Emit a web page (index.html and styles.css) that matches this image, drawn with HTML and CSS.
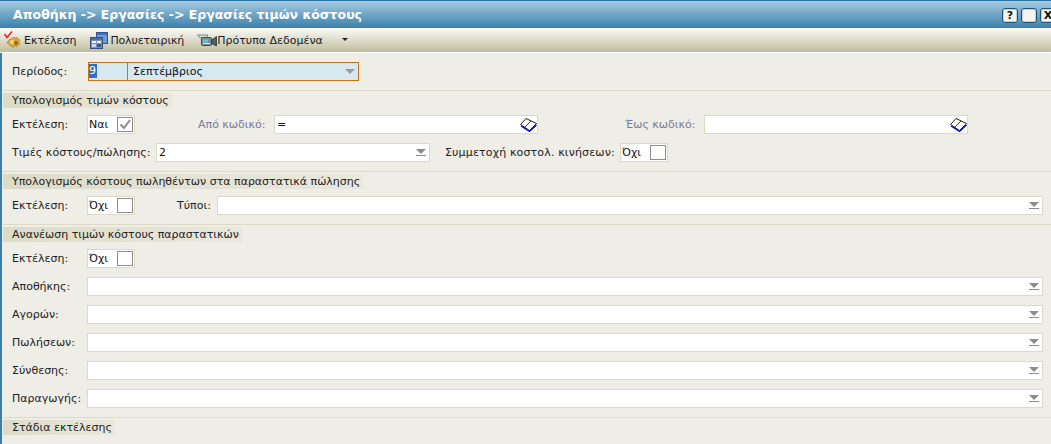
FILE: index.html
```html
<!DOCTYPE html>
<html>
  <head>
    <meta charset="utf-8" />
    <title>Εργασίες τιμών κόστους</title>
    <link rel="stylesheet" href="styles.css">
  </head>
  <body>
    <div class="window">
      <div class="titlebar">
        <h1>Αποθήκη -&gt; Εργασίες -&gt; Εργασίες τιμών κόστους</h1>
        <div class="winbtns">
          <span class="winbtn">?</span>
          <span class="winbtn"></span>
          <span class="winbtn">X</span>
        </div>
      </div>

      <div class="toolbar">
        <span class="tool tool-run">
          <svg width="18" height="18" viewBox="0 0 18 18">
            <path d="M5 10 L7 8 L9 8 L10 6 L12 7 L14 6 L15 8 L17 9 L16 11 L17 13 L15 14 L14 16 L12 15 L10 17 L9 15 L7 15 L6 13 L4 12 Z" fill="#dba63c" stroke="#b8842a" stroke-width="0.7" />
            <circle cx="9" cy="11" r="2.2" fill="#f2cf78" />
            <circle cx="13" cy="12" r="2" fill="#9a6420" />
            <path d="M1.5 3 L4 6.5 L9 0.5" fill="none" stroke="#e02828" stroke-width="1.6" />
          </svg>
          Εκτέλεση
        </span>
        <span class="tool tool-multi">
          <svg width="18" height="17" viewBox="0 0 18 17">
            <rect x="6.5" y="0.5" width="11" height="11" fill="#6d9ad8" stroke="#2f5596" />
            <rect x="7" y="1" width="10" height="2" fill="#3f70c0" />
            <rect x="0.5" y="5.5" width="12" height="11" fill="#7d94b8" stroke="#34507e" />
            <rect x="1" y="6" width="11" height="2" fill="#4f6c9c" />
            <rect x="2" y="9" width="4" height="2" fill="#eef2f8" />
            <rect x="7" y="9" width="4" height="2" fill="#eef2f8" />
            <rect x="2" y="12" width="4" height="3" fill="#cfd8e6" />
            <rect x="7" y="12" width="4" height="3" fill="#3c5580" />
          </svg>
          Πολυεταιρική
        </span>
        <span class="tool tool-tpl">
          <svg width="20" height="13" viewBox="0 0 20 13">
            <path d="M0.5 1 H11 L9 4 H3 Z" fill="#d4dce0" stroke="#5e6e76" stroke-width="0.8" />
            <rect x="4.5" y="3.5" width="10" height="8" rx="1" fill="#7d8f98" stroke="#3a4a52" />
            <rect x="6" y="5.5" width="5" height="3" fill="#58c4cc" />
            <rect x="6" y="9" width="7" height="1" fill="#d8e0e4" />
            <path d="M14.5 6 L19.5 2.5 V12 L14.5 9.5 Z" fill="#4f6068" stroke="#2c383e" stroke-width="0.8" />
          </svg>
          Πρότυπα Δεδομένα
        </span>
        <span class="tool-more"></span>
      </div>

      <div class="content">
        <div class="row">
          <label class="lbl">Περίοδος:</label>
          <div class="period">
            <span class="period-num"><span class="selected">9</span></span>
            <span class="period-name">Σεπτέμβριος</span>
            <span class="arrow-plain"></span>
          </div>
        </div>

        <section class="group">
          <h2>Υπολογισμός τιμών κόστους</h2>
          <div class="row">
            <label class="lbl">Εκτέλεση:</label>
            <div class="check"><span>Ναι</span>
              <span class="box">
                <svg width="14" height="13" viewBox="0 0 14 13"><path d="M2.5 6.5 L6 10 L12 2" fill="none" stroke="#8c8c8c" stroke-width="2" /></svg>
              </span>
            </div>
            <label class="lbl-from">Από κωδικό:</label>
            <div class="field field-code">
              <span>=</span>
              <svg class="book" width="17" height="14" viewBox="0 0 17 14">
                <path d="M0.5 6.5 L6 0.5 L16.5 5.5 L9.5 12.5 Z" fill="#fff" stroke="#000" stroke-width="0.9" />
                <path d="M1 8 L9.5 13.5 L16.5 7" fill="none" stroke="#0000e0" stroke-width="1.2" />
                <path d="M11 3 L4.5 9.5" stroke="#000" stroke-width="0.8" />
              </svg>
            </div>
            <label class="lbl-to">Έως κωδικό:</label>
            <div class="field field-code">
              <span></span>
              <svg class="book" width="17" height="14" viewBox="0 0 17 14">
                <path d="M0.5 6.5 L6 0.5 L16.5 5.5 L9.5 12.5 Z" fill="#fff" stroke="#000" stroke-width="0.9" />
                <path d="M1 8 L9.5 13.5 L16.5 7" fill="none" stroke="#0000e0" stroke-width="1.2" />
                <path d="M11 3 L4.5 9.5" stroke="#000" stroke-width="0.8" />
              </svg>
            </div>
          </div>
          <div class="row">
            <label class="lbl-auto">Τιμές κόστους/πώλησης:</label>
            <div class="field field-cost"><span>2</span><span class="arrow"></span></div>
            <label class="lbl-part">Συμμετοχή κοστολ. κινήσεων:</label>
            <div class="check"><span>Όχι</span><span class="box"></span></div>
          </div>
        </section>

        <section class="group">
          <h2>Υπολογισμός κόστους πωληθέντων στα παραστατικά πώλησης</h2>
          <div class="row">
            <label class="lbl">Εκτέλεση:</label>
            <div class="check"><span>Όχι</span><span class="box"></span></div>
            <label class="lbl-types">Τύποι:</label>
            <div class="field field-grow"><span></span><span class="arrow"></span></div>
          </div>
        </section>

        <section class="group">
          <h2>Ανανέωση τιμών κόστους παραστατικών</h2>
          <div class="row">
            <label class="lbl">Εκτέλεση:</label>
            <div class="check"><span>Όχι</span><span class="box"></span></div>
          </div>
          <div class="row">
            <label class="lbl">Αποθήκης:</label>
            <div class="field field-grow"><span></span><span class="arrow"></span></div>
          </div>
          <div class="row">
            <label class="lbl">Αγορών:</label>
            <div class="field field-grow"><span></span><span class="arrow"></span></div>
          </div>
          <div class="row">
            <label class="lbl">Πωλήσεων:</label>
            <div class="field field-grow"><span></span><span class="arrow"></span></div>
          </div>
          <div class="row">
            <label class="lbl">Σύνθεσης:</label>
            <div class="field field-grow"><span></span><span class="arrow"></span></div>
          </div>
          <div class="row">
            <label class="lbl">Παραγωγής:</label>
            <div class="field field-grow"><span></span><span class="arrow"></span></div>
          </div>
        </section>

        <section class="group">
          <h2>Στάδια εκτέλεσης</h2>
        </section>
      </div>
    </div>
  </body>
</html>
```

FILE: styles.css
```css
html, body {
  margin: 0;
  height: 100%;
  overflow: hidden;
}

body {
  font-family: "DejaVu Sans", "Liberation Sans", sans-serif;
  font-size: 11px;
  color: #222;
  background: #eeede6;
}

.window {
  display: flex;
  flex-direction: column;
  height: 444px;
  box-sizing: border-box;
  border-left: 2px solid #3a80ac;
}

/* title bar */
.titlebar {
  display: flex;
  align-items: center;
  justify-content: space-between;
  height: 28px;
  margin-left: -2px;
  box-sizing: border-box;
  border-top: 1px solid #2c74a4;
  background: linear-gradient(#a6cbe0, #3b80ac);
}

.titlebar h1 {
  margin: 0 0 0 13px;
  font-size: 12.5px;
  font-weight: bold;
  color: #fff;
  white-space: nowrap;
}

.winbtns {
  display: flex;
  gap: 3px;
  margin-right: -5px;
  padding-top: 1px;
}

.winbtn {
  box-sizing: border-box;
  width: 16px;
  height: 15px;
  border: 1px solid #1e5480;
  border-radius: 3px;
  background: #f6f4ec;
  box-shadow: inset 0 0 0 1px #bcd0de;
  font-size: 11px;
  font-weight: bold;
  line-height: 13px;
  text-align: center;
  color: #111;
}

/* toolbar */
.toolbar {
  display: flex;
  align-items: center;
  height: 24px;
  margin-left: -2px;
  border-bottom: 1px solid #fff;
  background: linear-gradient(#fbfbf6, #c0bd9e);
}

.tool {
  display: flex;
  align-items: center;
  white-space: nowrap;
  color: #1a1a2a;
}

.tool-run {
  margin-left: 3px;
  gap: 3px;
}

.tool-multi {
  margin-left: 14px;
  gap: 2px;
  letter-spacing: -0.15px;
}

.tool-tpl {
  margin-left: 13px;
}

.tool-more {
  width: 0;
  height: 0;
  margin: 0 0 2px 19px;
  border: 3px solid transparent;
  border-top: 3px solid #222;
  border-bottom: 0;
}

/* form */
.content {
  flex: 1;
  padding-top: 9px;
}

.row {
  display: flex;
  align-items: center;
  height: 19px;
  margin-bottom: 9px;
  padding-left: 10px;
  white-space: nowrap;
}

.lbl {
  width: 75px;
  flex: none;
}

.lbl-auto {
  width: 144px;
  flex: none;
  letter-spacing: 0.08px;
}

.lbl-from {
  margin-left: 63px;
  width: 76px;
  color: #7a7a9a;
}

.lbl-to {
  margin-left: 87px;
  width: 79px;
  color: #7a7a9a;
}

.lbl-part {
  margin-left: 15px;
  width: 175px;
  letter-spacing: 0.15px;
}

.lbl-types {
  margin-left: 42px;
  width: 40px;
}

.group {
  margin-left: 1px;
  border-top: 1px solid #dcdac6;
}

.group h2 {
  display: table;
  margin: 2px 0 7px;
  padding: 0 3px 0 9px;
  height: 15px;
  line-height: 15px;
  font-size: 11px;
  font-weight: normal;
  background: linear-gradient(to right, #dddbc8, #e9e8dd);
}

.group .row {
  padding-left: 9px;
}

.field,
.check {
  display: flex;
  align-items: center;
  box-sizing: border-box;
  height: 19px;
  border: 1px solid #dcdac6;
  background: #fff;
  color: #111;
}

.field {
  justify-content: space-between;
  padding: 0 3px 0 2px;
}

.check {
  flex: none;
  width: 48px;
  justify-content: space-between;
  padding: 0 1px 0 1px;
}

.box {
  display: flex;
  align-items: center;
  justify-content: center;
  box-sizing: border-box;
  width: 16px;
  height: 15px;
  border: 1px solid #8c8c8c;
  background: #fff;
}

.field-code {
  width: 264px;
  padding-right: 0;
}

.field-cost {
  width: 274px;
}

.field-grow {
  flex: 1;
  margin-right: 8px;
}

/* dropdown arrow with a bar under it */
.arrow {
  position: relative;
  width: 0;
  height: 0;
  margin-top: -2px;
  border: 5px solid transparent;
  border-top: 5px solid #8c8c8c;
  border-bottom: 0;
}

.arrow::after {
  content: "";
  position: absolute;
  left: -5px;
  top: 1px;
  width: 10px;
  height: 1px;
  background: #8c8c8c;
}

.arrow-plain {
  width: 0;
  height: 0;
  margin-right: 3px;
  border: 5px solid transparent;
  border-top: 5px solid #9a9a9a;
  border-bottom: 0;
}

.period {
  display: flex;
  align-items: center;
  box-sizing: border-box;
  width: 271px;
  height: 19px;
  margin-left: 1px;
  border: 1px solid #c8701a;
  background: #d6e8f2;
  color: #111;
}

.period-num {
  box-sizing: border-box;
  width: 39px;
  height: 100%;
  border-right: 1px solid #c8701a;
  line-height: 17px;
}

.selected {
  display: inline-block;
  width: 8px;
  height: 14px;
  line-height: 14px;
  background: #2f6fd0;
  color: #fff;
  vertical-align: 1px;
}

.period-name {
  flex: 1;
  padding-left: 5px;
}
```
